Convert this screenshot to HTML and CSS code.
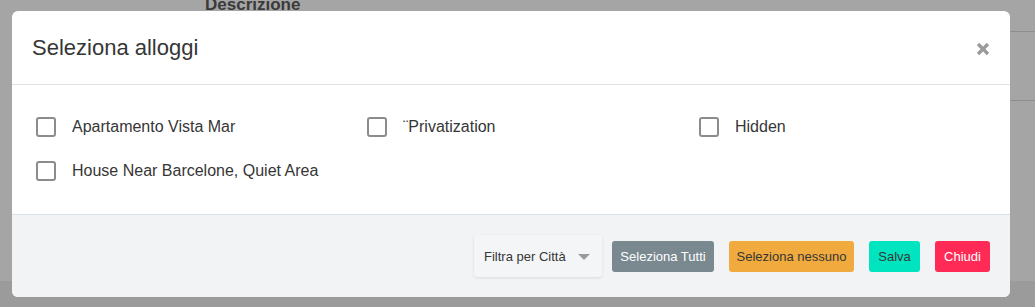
FILE: index.html
```html
<!DOCTYPE html>
<html lang="it">
<head>
<meta charset="utf-8">
<title>Seleziona alloggi</title>
<link rel="stylesheet" href="styles.css">
</head>
<body>
<div class="page">
  <div class="table-head"><span class="th-desc">Descrizione</span></div>
  <div class="table-row"></div>
  <div class="table-row tall"></div>
  <div class="table-foot"></div>
</div>

<div class="modal">
  <header class="modal-head">
    <h2 class="modal-title">Seleziona alloggi</h2>
    <button class="close" aria-label="Chiudi">
      <svg width="14" height="14" viewBox="0 0 14 14"><path d="M2 2 L12 12 M12 2 L2 12" stroke="#9a9a9a" stroke-width="3.2" stroke-linecap="butt"/></svg>
    </button>
  </header>
  <section class="modal-body">
    <div class="grid">
      <label class="item"><span class="box"></span><span class="lbl">Apartamento Vista Mar</span></label>
      <label class="item"><span class="box"></span><span class="lbl">¨Privatization</span></label>
      <label class="item"><span class="box"></span><span class="lbl">Hidden</span></label>
      <label class="item"><span class="box"></span><span class="lbl">House Near Barcelone, Quiet Area</span></label>
    </div>
  </section>
  <footer class="modal-foot">
    <div class="select">
      <span>Filtra per Città</span>
      <span class="caret"></span>
    </div>
    <button class="btn btn-grey">Seleziona Tutti</button>
    <button class="btn btn-orange">Seleziona nessuno</button>
    <button class="btn btn-teal">Salva</button>
    <button class="btn btn-red">Chiudi</button>
  </footer>
</div>
</body>
</html>
```

FILE: styles.css
```css
* { box-sizing: border-box; }
html, body { margin: 0; padding: 0; }
body {
  width: 1035px;
  height: 307px;
  overflow: hidden;
  background: #a5a5a5;
  font-family: "Liberation Sans", Arial, Helvetica, sans-serif;
  color: #363636;
  position: relative;
}

/* background page (dimmed) */
.page { width: 100%; height: 100%; display: flex; flex-direction: column; }
.table-head {
  height: 32px;
  margin-left: 14px;
  border-bottom: 1px solid #8e8e8e;
  position: relative;
}
.th-desc {
  position: absolute;
  left: 191px;
  top: -5px;
  font-weight: bold;
  font-size: 17px;
  line-height: 20px;
  color: #3a3a3a;
}
.table-row { height: 69px; margin-left: 14px; border-bottom: 1px solid #8e8e8e; }
.table-row.tall { height: 180px; border-bottom: none; }
.table-foot { flex: 1; background: #9b9b9b; }

/* modal */
.modal {
  position: absolute;
  left: 12px;
  top: 11px;
  width: 998px;
  height: 286px;
  background: #fff;
  border-radius: 6px;
  overflow: hidden;
  display: flex;
  flex-direction: column;
}
.modal-head {
  height: 74px;
  padding: 0 20px;
  display: flex;
  align-items: center;
  justify-content: space-between;
  border-bottom: 1px solid #dce2e5;
}
.modal-title {
  margin: 0;
  font-weight: normal;
  font-size: 22px;
  color: #363636;
}
.close {
  border: 0;
  background: transparent;
  padding: 0;
  width: 14px;
  height: 14px;
  display: flex;
  margin-top: 2px;
}
.modal-body {
  padding: 20px 24px;
  height: 129px;
}
.grid {
  display: grid;
  grid-template-columns: 331px 332px 331px;
  grid-auto-rows: 44px;
}
.item {
  display: flex;
  align-items: center;
  gap: 16px;
  font-size: 16px;
  color: #363636;
}
.box {
  width: 20px;
  height: 20px;
  border: 2px solid #8c8c8c;
  border-radius: 3px;
  flex: none;
}
.modal-foot {
  flex: 1;
  background: #f2f3f5;
  border-top: 1px solid #dde2e6;
  display: flex;
  align-items: center;
  justify-content: flex-end;
  padding: 0 20px 0 0;
  gap: 15px;
}
.select {
  width: 128px;
  height: 42px;
  background: #f4f5f7;
  border-radius: 3px;
  box-shadow: 0 1px 3px rgba(0,0,0,0.10);
  display: flex;
  align-items: center;
  padding-left: 10px;
  font-size: 13px;
  color: #363636;
  white-space: nowrap;
  margin-right: -5px;
}
.caret {
  width: 0; height: 0;
  border-left: 6px solid transparent;
  border-right: 6px solid transparent;
  border-top: 6px solid #9a9a9a;
  margin-left: 12px;
  margin-top: 1px;
}
.btn {
  height: 31px;
  border: 0;
  border-radius: 3px;
  font-family: inherit;
  font-size: 13px;
  padding: 0;
  white-space: nowrap;
  text-align: center;
  cursor: pointer;
}
.btn-grey { background: #7a8890; color: #fff; width: 102px; }
.btn-orange { background: #f0aa3d; color: #363636; width: 125px; }
.btn-teal { background: #00e5bf; color: #363636; width: 51px; }
.btn-red { background: #ff2b56; color: #fff; width: 55px; }
```
